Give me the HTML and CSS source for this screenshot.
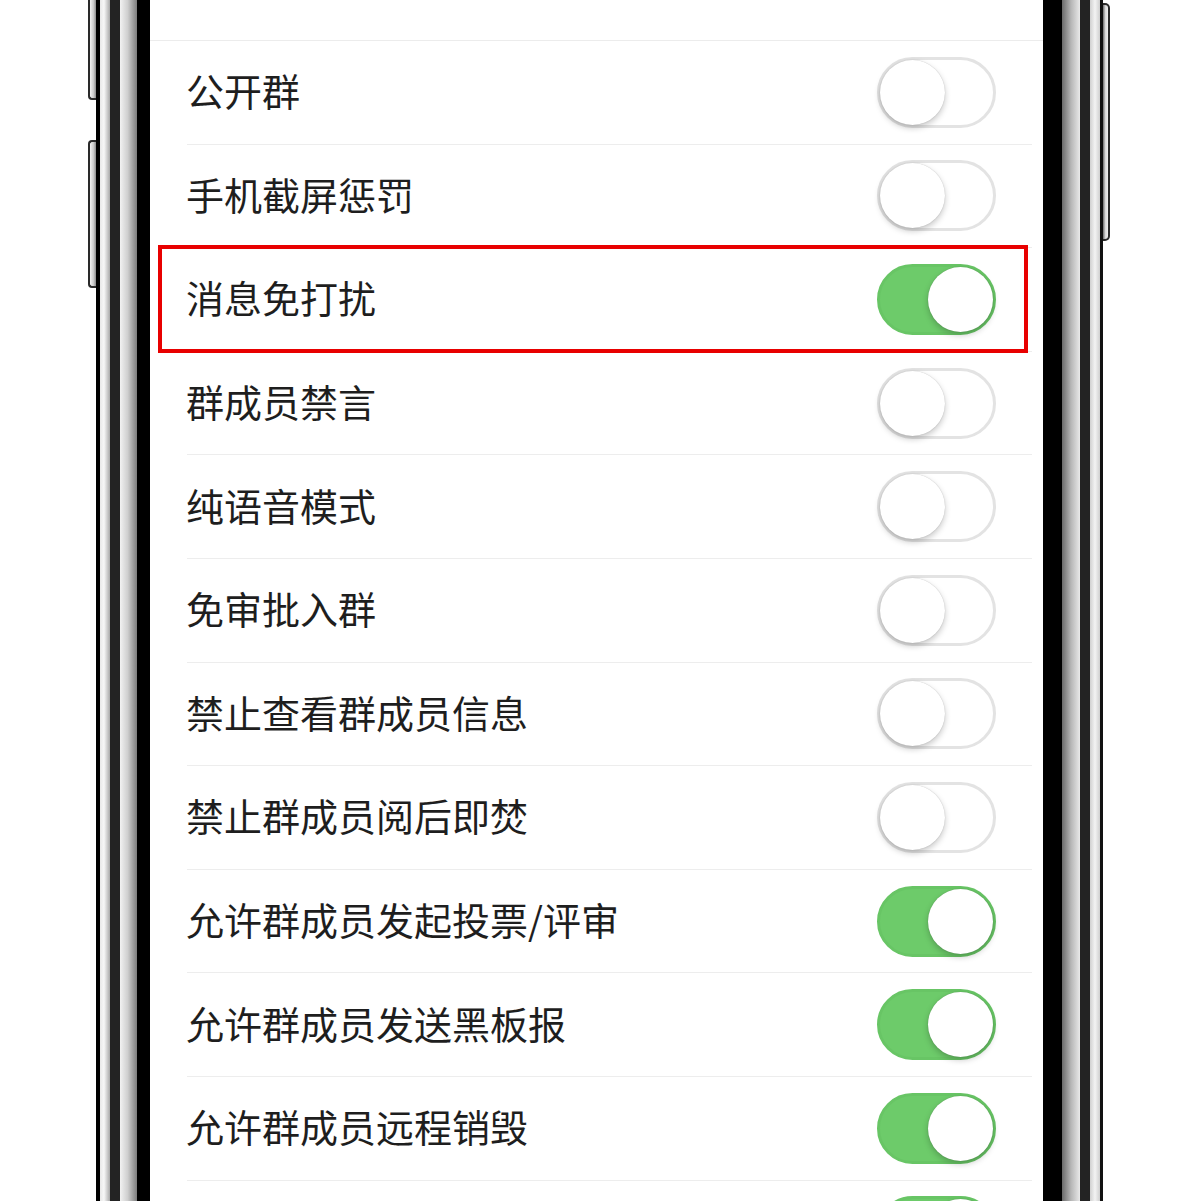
FILE: index.html
```html
<!DOCTYPE html>
<html lang="zh-CN">
<head>
<meta charset="utf-8">
<title>群设置</title>
<link rel="stylesheet" href="styles.css">
</head>
<body>
<div class="device">
  <div class="keys keys-left">
    <span class="key key-top"></span>
    <span class="key key-mid"></span>
  </div>
  <div class="rim rim-black-l"></div>
  <div class="rim rim-silver-a"></div>
  <div class="rim rim-dark"></div>
  <div class="rim rim-silver-b"></div>
  <div class="rim rim-bezel-l"></div>

  <main class="screen">
    <div class="top-space"></div>
    <ul class="settings">
      <li class="row"><span class="label">公开群</span><span class="switch"><i class="knob"></i></span></li>
      <li class="row"><span class="label">手机截屏惩罚</span><span class="switch"><i class="knob"></i></span></li>
      <li class="row is-marked"><span class="label">消息免打扰</span><span class="switch on"><i class="knob"></i></span><span class="mark"></span></li>
      <li class="row"><span class="label">群成员禁言</span><span class="switch"><i class="knob"></i></span></li>
      <li class="row"><span class="label">纯语音模式</span><span class="switch"><i class="knob"></i></span></li>
      <li class="row"><span class="label">免审批入群</span><span class="switch"><i class="knob"></i></span></li>
      <li class="row"><span class="label">禁止查看群成员信息</span><span class="switch"><i class="knob"></i></span></li>
      <li class="row"><span class="label">禁止群成员阅后即焚</span><span class="switch"><i class="knob"></i></span></li>
      <li class="row"><span class="label">允许群成员发起投票/评审</span><span class="switch on"><i class="knob"></i></span></li>
      <li class="row"><span class="label">允许群成员发送黑板报</span><span class="switch on"><i class="knob"></i></span></li>
      <li class="row"><span class="label">允许群成员远程销毁</span><span class="switch on"><i class="knob"></i></span></li>
      <li class="row"><span class="label"></span><span class="switch on"><i class="knob"></i></span></li>
    </ul>
  </main>

  <div class="rim rim-bezel-r"></div>
  <div class="rim rim-silver-c"></div>
  <div class="rim rim-dark"></div>
  <div class="rim rim-silver-d"></div>
  <div class="rim rim-black-r"></div>
  <div class="keys keys-right">
    <span class="key key-power"></span>
  </div>
</div>
</body>
</html>
```

FILE: styles.css
```css
html, body {
  margin: 0;
  padding: 0;
  background: #ffffff;
}

body {
  height: 1201px;
  overflow: hidden;
  font-family: "Noto Sans CJK SC", "Noto Sans", sans-serif;
}

.device {
  display: flex;
  height: 1201px;
  padding-left: 88px;
}

/* hardware keys */
.keys {
  display: flex;
  flex-direction: column;
  width: 8px;
}

.keys-left {
  gap: 40px;
}

.key {
  display: block;
  box-sizing: border-box;
  border: 2px solid #2a2a2a;
  background: linear-gradient(90deg, #f4f4f4, #c9c9c9 60%, #8a8a8a);
}

.keys-left .key {
  border-right: none;
  border-radius: 4px 0 0 4px;
}

.key-top {
  height: 104px;
  margin-top: -4px;
}

.key-mid {
  height: 148px;
}

.keys-right {
  width: 7px;
}

.keys-right .key {
  border-left: none;
  border-radius: 0 5px 5px 0;
  background: linear-gradient(90deg, #6d6d6d, #d9d9d9 50%, #f0f0f0);
}

.key-power {
  height: 238px;
  margin-top: 3px;
}

/* frame rims */
.rim {
  flex: none;
}

.rim-black-l { width: 4px; background: #000; }
.rim-silver-a { width: 10px; background: linear-gradient(90deg, #e8e8e8, #f7f7f7 40%, #a8a8a8); }
.rim-dark { width: 10px; background: #232323; }
.rim-silver-b { width: 17px; background: linear-gradient(90deg, #f2f2f2, #cfcfcf 45%, #7d7d7d); }
.rim-bezel-l { width: 13px; background: #000; }

.rim-bezel-r { width: 19px; background: #000; }
.rim-silver-c { width: 18px; background: linear-gradient(90deg, #6a6a6a, #b6b6b6 50%, #e9e9e9); }
.rim-silver-d { width: 10px; background: linear-gradient(90deg, #d0d0d0, #f3f3f3 50%, #cfcfcf); }
.rim-black-r { width: 3px; background: #111; }

/* screen */
.screen {
  width: 893px;
  flex: none;
  background: #ffffff;
  overflow: hidden;
}

.top-space {
  height: 40px;
  border-bottom: 1px solid #ececec;
}

.settings {
  list-style: none;
  margin: 0;
  padding: 0;
}

.row {
  position: relative;
  box-sizing: border-box;
  height: 103.6px;
  margin-left: 37px;
  width: 845px;
  padding-right: 36px;
  display: flex;
  align-items: center;
  justify-content: space-between;
  border-bottom: 1px solid #ededed;
}

.label {
  font-size: 38px;
  line-height: 1;
  margin-top: -4px;
  margin-left: -1px;
  color: #1e1e1e;
  letter-spacing: 0;
}

/* toggle switch */
.switch {
  box-sizing: border-box;
  width: 119px;
  height: 71px;
  border-radius: 36px;
  border: 3px solid #e3e3e3;
  background: #ffffff;
  display: flex;
  align-items: center;
  justify-content: flex-start;
}

.switch.on {
  background: #6dcb6a;
  border-color: #68c565;
  justify-content: flex-end;
}

.knob {
  display: block;
  width: 65px;
  height: 65px;
  border-radius: 50%;
  background: #ffffff;
  box-shadow: 0 3px 6px rgba(0, 0, 0, 0.22), 0 0 1px rgba(0, 0, 0, 0.25);
}

/* red highlight frame over the selected row */
.mark {
  position: absolute;
  left: -29px;
  top: -3px;
  width: 870px;
  height: 108px;
  box-sizing: border-box;
  border: 4px solid #e80000;
  pointer-events: none;
}
```
